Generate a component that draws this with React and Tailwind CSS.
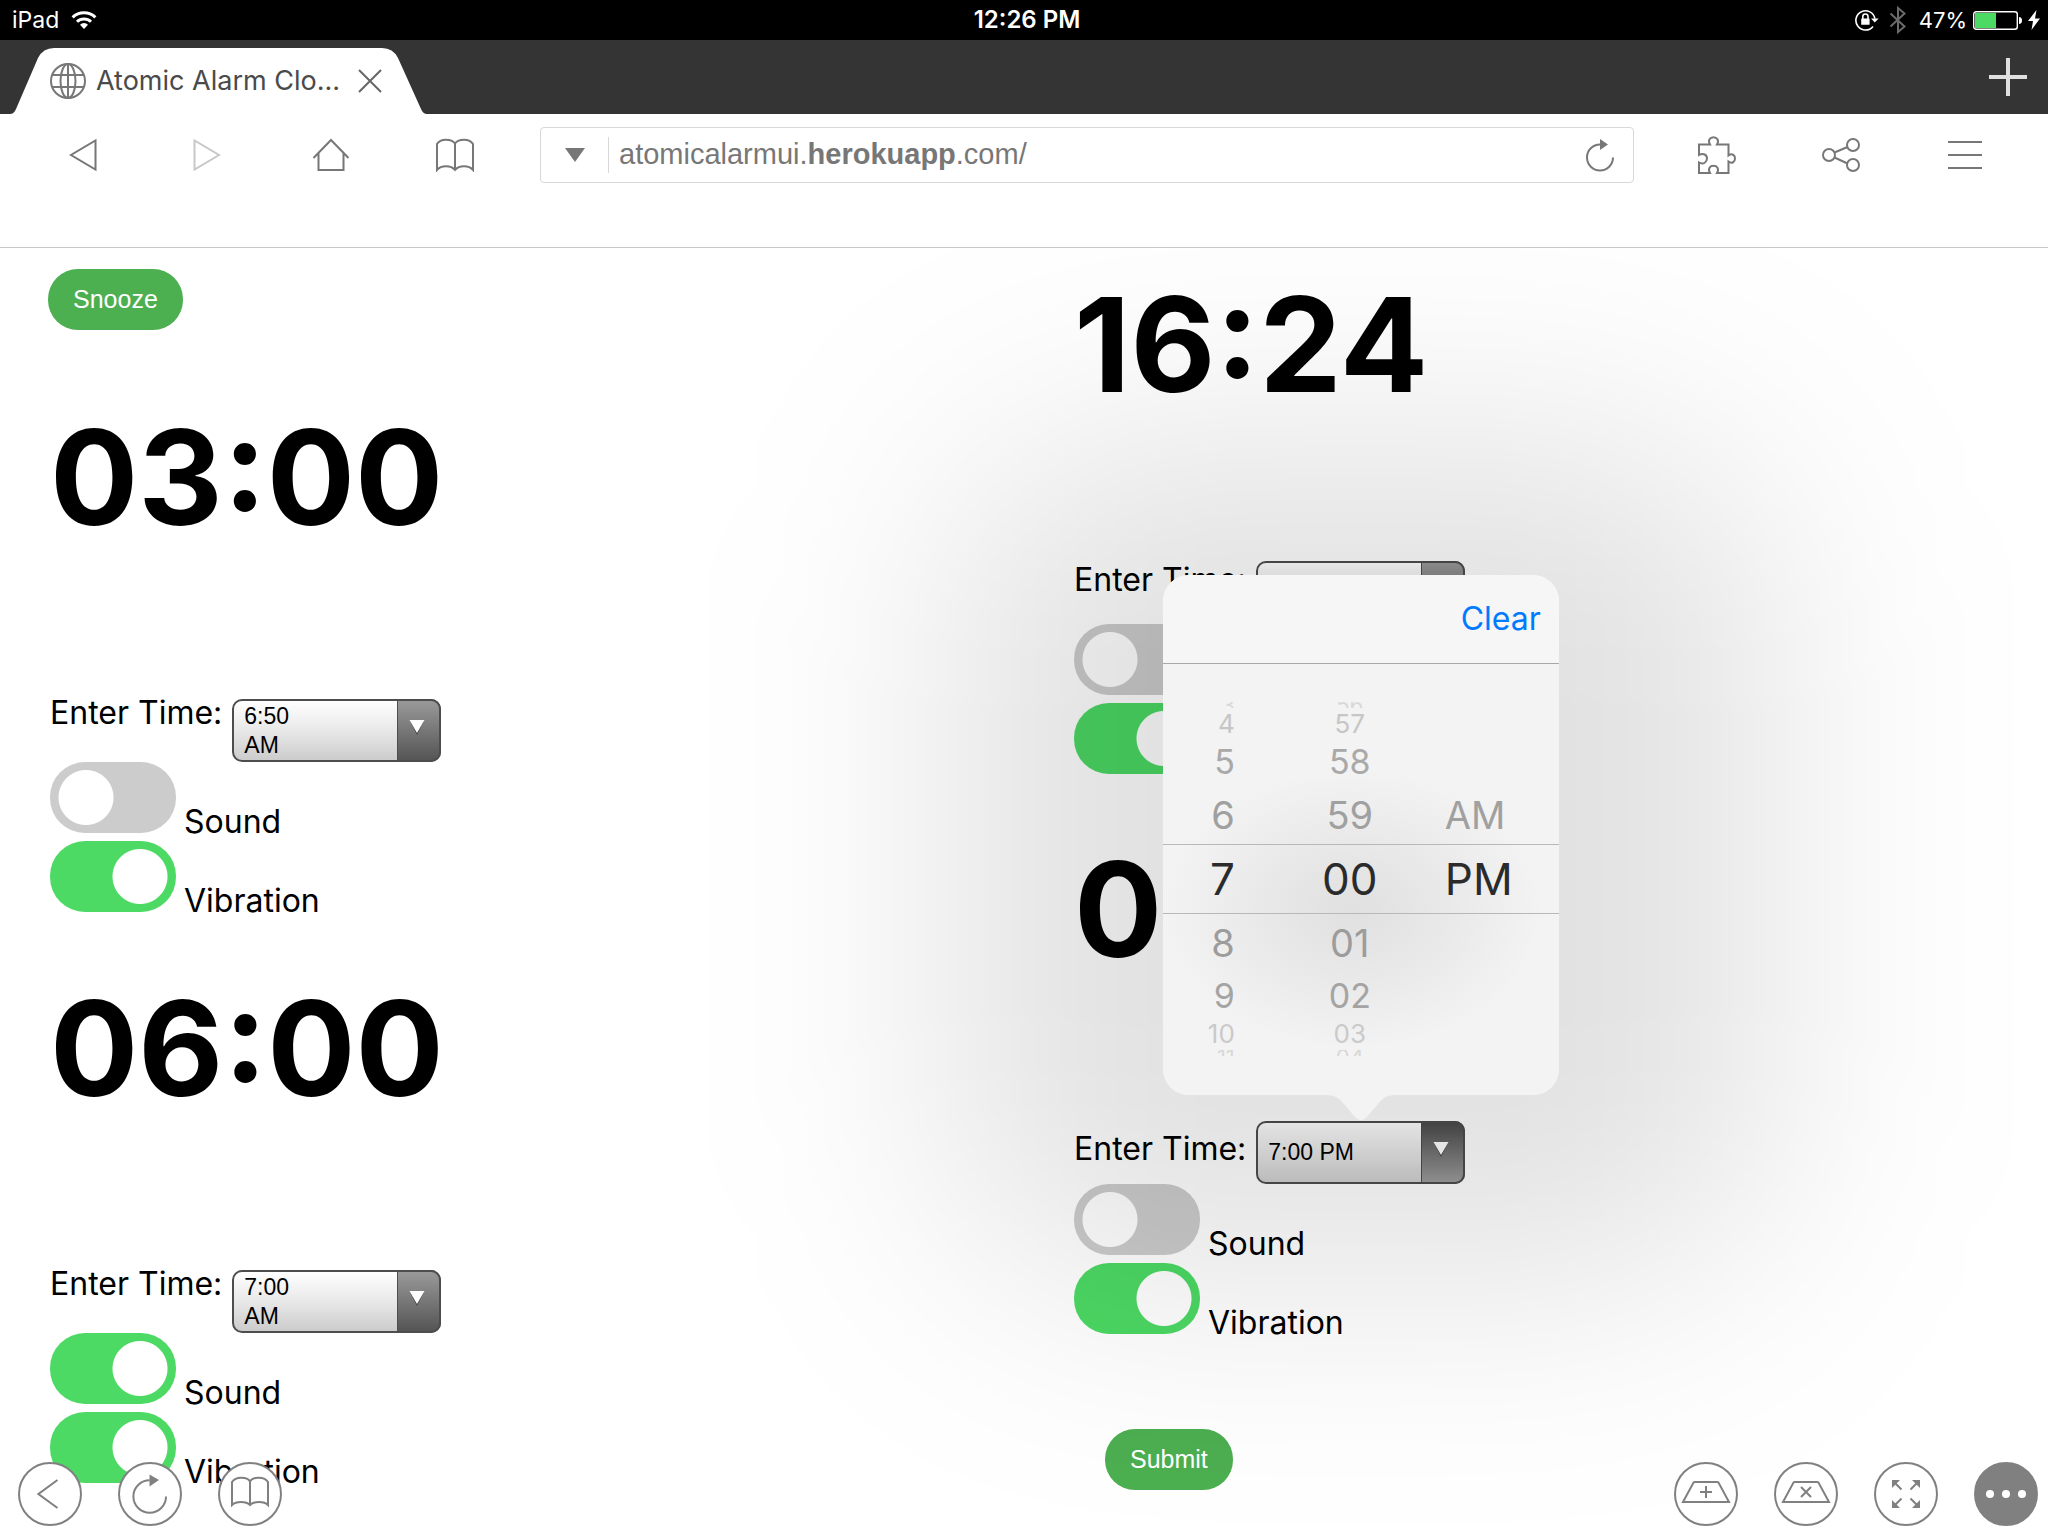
import React, { useState } from "react";

const SANS = "font-['Inter',sans-serif]";
const ARIAL = "font-['Liberation_Sans',Arial,sans-serif]";

/* ---------- icons ---------- */

function Line({ w, h, sw = 2, className = "", children }) {
  return (
    <svg width={w} height={h} viewBox={`0 0 ${w} ${h}`} fill="none" stroke="currentColor" strokeWidth={sw} className={className} aria-hidden="true">
      {children}
    </svg>
  );
}

const WifiIcon = () => (
  <svg width="26" height="18" viewBox="0 0 26 18" fill="none" stroke="#fff" strokeWidth="3" aria-hidden="true">
    <path d="M1.6 6.4a16.3 16.3 0 0 1 22.8 0" />
    <path d="M6 10.8a10 10 0 0 1 14 0" />
    <path d="M13 18l-4-4.3a5.8 5.8 0 0 1 8 0z" fill="#fff" stroke="none" />
  </svg>
);

const RotationLockIcon = () => (
  <svg width="24" height="22" viewBox="0 0 24 22" fill="none" stroke="#fff" strokeWidth="1.6" aria-hidden="true">
    <path d="M18 17.400A9.600 9.600 0 1 1 19.900 9.600" />
    <path d="M16 9.400h7.600l-3.800 4.200z" fill="#fff" stroke="none" />
    <path d="M7.800 10V7.600a2.600 2.600 0 0 1 5.200 0V10" />
    <rect x="6.200" y="9.400" width="8.400" height="6.400" rx="0.600" fill="#fff" stroke="none" />
  </svg>
);

const BluetoothIcon = () => (
  <Line w={18} h={28} className="text-[#6b6b6b]">
    <path d="M1.500 7.500l14 13L9 26V2l6.500 5.500-14 13" />
  </Line>
);

const BatteryIcon = () => (
  <svg width="49" height="19" viewBox="0 0 49 19" fill="none" aria-hidden="true">
    <rect x="0.7" y="0.7" width="43.600" height="17.600" rx="2.500" stroke="#fff" strokeWidth="1.400" />
    <rect x="2" y="2" width="21" height="15" fill="#4cd964" />
    <path d="M46 6c2 0 3 1.500 3 3.500S48 13 46 13z" fill="#fff" />
  </svg>
);

const BoltIcon = () => (
  <svg width="12" height="20" viewBox="0 0 12 20" fill="#fff" aria-hidden="true">
    <path d="M8.500 0L0 11h5L3.500 20L12 8.500H7z" />
  </svg>
);

const GlobeIcon = () => (
  <Line w={36} h={36} className="shrink-0 text-[#777]">
    <circle cx="18" cy="18" r="17" />
    <ellipse cx="18" cy="18" rx="7.500" ry="17" />
    <path d="M18 1v34M2.500 12h31M2.500 24h31" />
  </Line>
);

const BackIcon = () => (
  <Line w={28} h={34}>
    <path d="M26.500 2.500v29L2 17z" />
  </Line>
);

const ForwardIcon = () => (
  <Line w={28} h={34} className="text-[#c8c8c8]">
    <path d="M1.500 2.500v29L26 17z" />
  </Line>
);

const HomeIcon = () => (
  <Line w={38} h={34}>
    <path d="M1.500 20L19 2l17.500 18M6.500 15.500V32h25V15.500" />
  </Line>
);

const BookIcon = () => (
  <Line w={40} h={34}>
    <path d="M20 5.500C16 .5 5.500 .5 2 6v26c4-5 14-5 18 0c4-5 14-5 18 0V6C34.500 .5 24 .5 20 5.500zM20 5.500V32" />
  </Line>
);

const ReloadIcon = () => (
  <Line w={30} h={34}>
    <path d="M28 19.500a13 13 0 1 1-13-13" />
    <path d="M15 1v11l8-5.500z" fill="currentColor" stroke="none" />
  </Line>
);

const PuzzleIcon = () => (
  <Line w={38} h={38}>
    <path d="M1 8.500H12C9.500 4.500 12 1.200 15.500 1.200S21.500 4.500 19 8.500H30.500V19.500C34 17 37 19 37 22.500S34 28 30.500 25.500V37H19C21.500 32.500 19 29.700 15.500 29.700S9.500 32.500 12 37H1V26.500C5.500 29 9 26 9 22.500S5.500 16.500 1 19Z" />
  </Line>
);

const ShareIcon = () => (
  <Line w={40} h={36}>
    <circle cx="8" cy="18" r="6" />
    <circle cx="32" cy="8" r="6" />
    <circle cx="32" cy="28" r="6" />
    <path d="M13.500 15.500l13-5.500M13.500 20.500l13 6" />
  </Line>
);

const MenuIcon = () => (
  <Line w={36} h={30}>
    <path d="M1 2h34M1 15h34M1 28h34" />
  </Line>
);

/* ---------- browser chrome ---------- */

function StatusBar() {
  return (
    <div className={`${SANS} relative flex h-10 items-center justify-between bg-black pr-2 pl-3 text-[23px] text-white`}>
      <div className="flex items-center gap-3">
        <span>iPad</span>
        <WifiIcon />
      </div>
      <span className="absolute inset-x-0 pl-1.5 text-center text-2xl font-semibold">12:26 PM</span>
      <div className="flex items-center">
        <RotationLockIcon />
        <div className="pr-3 pl-2.5"><BluetoothIcon /></div>
        <span className="pr-1.5 text-[22px]">47%</span>
        <BatteryIcon />
        <div className="pl-1.5"><BoltIcon /></div>
      </div>
    </div>
  );
}

function TabStrip() {
  return (
    <div className="flex h-[74px] items-end justify-between bg-[#343434] pl-2.5">
      <div className="relative h-[66px] w-[417px]">
        <svg className="absolute inset-0" width="417" height="66" viewBox="0 0 417 66" fill="#fff" aria-hidden="true">
          <path d="M0 66Q4 66 6 61L28 10Q33 0 44 0H372Q383 0 388 10L411 61Q413 66 417 66Z" />
        </svg>
        <div className={`${SANS} relative flex h-full items-center pl-10 text-[#4a4a4a]`}>
          <GlobeIcon />
          <span className="w-[256px] truncate pl-2.5 text-[27px]">Atomic Alarm Clo...</span>
          <button type="button" aria-label="Close tab" className="ml-3.5 flex size-7 items-center justify-center text-[#666]">
            <Line w={24} h={24}>
              <path d="M1 1l22 22M23 1L1 23" />
            </Line>
          </button>
        </div>
      </div>
      <button type="button" aria-label="New tab" className="flex h-full w-20 items-center justify-center text-[#e0e0e0]">
        <Line w={38} h={38} sw={4}>
          <path d="M19 0v38M0 19h38" />
        </Line>
      </button>
    </div>
  );
}

function ToolButton({ label, children }) {
  return (
    <button type="button" aria-label={label} className="flex h-14 w-[124px] shrink-0 items-center justify-center">
      {children}
    </button>
  );
}

function Toolbar() {
  return (
    <div className="flex h-[134px] items-start border-b border-[#c8c8c8] bg-white pt-[13px] pr-[21px] pl-[21px] text-[#777]">
      <ToolButton label="Back"><BackIcon /></ToolButton>
      <ToolButton label="Forward"><ForwardIcon /></ToolButton>
      <ToolButton label="Home"><HomeIcon /></ToolButton>
      <ToolButton label="Bookmarks"><BookIcon /></ToolButton>
      <div className="mr-[21px] ml-[23px] flex h-14 flex-1 items-center rounded-sm border border-[#d8d8d8]">
        <button type="button" aria-label="Site options" className="flex h-9 w-[68px] items-center justify-center border-r border-[#d8d8d8]">
          <svg width="20" height="14" viewBox="0 0 20 14" fill="currentColor" aria-hidden="true">
            <path d="M0 0h20L10 14z" />
          </svg>
        </button>
        <div className={`${ARIAL} relative h-full flex-1 text-[29px]`}>
          <input aria-label="Address" defaultValue="atomicalarmui.herokuapp.com/" className="size-full bg-transparent px-2.5 text-transparent outline-none" />
          <span aria-hidden="true" className="pointer-events-none absolute inset-0 px-2.5 leading-[52px]">
            atomicalarmui.<b>herokuapp</b>.com/
          </span>
        </div>
        <button type="button" aria-label="Reload" className="flex h-full w-[66px] items-center justify-center">
          <ReloadIcon />
        </button>
      </div>
      <ToolButton label="Extensions"><PuzzleIcon /></ToolButton>
      <ToolButton label="Share"><ShareIcon /></ToolButton>
      <ToolButton label="Menu"><MenuIcon /></ToolButton>
    </div>
  );
}

/* ---------- wheel picker ---------- */

const ROWS = [
  "h-1.5 text-[22px] leading-[6px] text-[#d8d8d8]",
  "h-8 text-[26px] leading-8 text-[#c6c6c6]",
  "h-11 text-[34px] leading-[44px] text-[#a9a9a9]",
  "h-[60px] text-[38px] leading-[62px] text-[#a0a0a0]",
  "h-[70px] text-[44px] leading-[70px] text-[#2b2b2b]",
  "h-[60px] text-[38px] leading-[58px] text-[#9c9c9c]",
  "h-11 text-[34px] leading-[44px] text-[#a4a4a4]",
  "h-8 text-[26px] leading-8 text-[#cacaca]",
  "h-1.5 text-[22px] leading-[14px] text-[#d8d8d8]",
];

function Wheel({ label, items, className }) {
  return (
    <ul role="listbox" aria-label={label} className={className}>
      {items.map((item, i) => (
        <li key={i} role="option" aria-selected={i === 4} className={`overflow-hidden ${ROWS[i]}`}>
          {item}
        </li>
      ))}
    </ul>
  );
}

function TimePopover() {
  return (
    <>
      <div className="pointer-events-none absolute -bottom-[97px] left-1/2 z-10 h-[840px] w-[820px] -translate-x-1/2 rounded-[160px] bg-black/[0.118] blur-[125px]" />
      <div role="dialog" aria-label="Choose time" className={`${SANS} absolute bottom-full left-1/2 z-10 mb-[26px] w-[396px] -translate-x-1/2 rounded-[26px] bg-[#f3f3f3]`}>
        <div className="flex h-[89px] items-center justify-end rounded-t-[26px] border-b border-[#a8a8a8] bg-[#f6f6f6] px-[18px]">
          <button type="button" className="text-[32px] text-[#007aff]">Clear</button>
        </div>
        <div className="relative flex h-[431px] rounded-b-[26px] bg-[radial-gradient(ellipse_190px_140px_at_48%_57%,#e0e0e0,#e9e9e9_50%,#f3f3f3)] pt-[38px]">
          <div className="pointer-events-none absolute inset-x-0 top-[180px] h-[70px] border-y border-[#b8b8b8]" />
          <Wheel label="Hour" items={["3", "4", "5", "6", "7", "8", "9", "10", "11"]} className="w-[72px] text-right" />
          <Wheel label="Minute" items={["56", "57", "58", "59", "00", "01", "02", "03", "04"]} className="ml-5 w-[190px] text-center" />
          <Wheel label="Period" items={["", "", "", "AM", "PM", "", "", "", ""]} className="flex-1" />
        </div>
        <svg className="absolute top-full left-1/2 -translate-x-1/2" width="70" height="26" viewBox="0 0 70 26" fill="#f3f3f3" aria-hidden="true">
          <path d="M0 0C10 0 14 4 18 9L29 22Q35 28.500 41 22L52 9C56 4 60 0 70 0Z" />
        </svg>
      </div>
    </>
  );
}

/* ---------- alarm page ---------- */

const VALUE_PAD = {
  wrapped: "items-start pt-[3px] pr-24",
  centered: "items-center",
  empty: "items-start pt-2",
};

function TimeField({ id, value, layout, open }) {
  return (
    <div className="flex items-baseline gap-2.5">
      <label htmlFor={id} className="leading-[48px]">Enter Time:</label>
      <div className="relative h-[63px] w-[209px]">
        <select
          id={id}
          defaultValue={value}
          className={`${open ? "bg-[linear-gradient(#fff,#cfcfcf)]" : "bg-[linear-gradient(#fff,#e8e8e8_50%,#cccccc)]"} absolute inset-0 size-full appearance-none rounded-[10px] border-2 border-[#4d4d4d] text-transparent`}
        >
          <option value={value}>{value}</option>
        </select>
        <div className="pointer-events-none relative flex h-full">
          <div className={`${ARIAL} flex flex-1 pl-3 text-[23px] leading-[29px] ${VALUE_PAD[layout]}`}>
            <span>{value || "\u00a0"}</span>
          </div>
          <div className={`${open ? "bg-[linear-gradient(#4b4b4b,#9d9d9d)]" : "bg-[linear-gradient(#999,#555)]"} flex w-11 items-center justify-center rounded-r-[10px] border-2 border-l border-[#4d4d4d] pr-1 pb-1.5`}>
            <svg width="16" height="15" viewBox="0 0 16 15" aria-hidden="true">
              <path d="M1 1h14L8 15z" fill="#444" />
              <path d="M.5 0h15L8 13z" fill="#fff" />
            </svg>
          </div>
        </div>
        {open && <TimePopover />}
      </div>
    </div>
  );
}

function Toggle({ id, label, initial }) {
  const [on, setOn] = useState(initial);
  return (
    <div className="flex items-baseline gap-2">
      <input
        id={id}
        type="checkbox"
        role="switch"
        checked={on}
        onChange={(e) => setOn(e.target.checked)}
        className="h-[71px] w-[126px] appearance-none rounded-[35px] bg-[#ccc] bg-[radial-gradient(circle_27px,#fff_27px,transparent_28px)] bg-[position:-27px_0] bg-no-repeat checked:bg-[#4cd964] checked:bg-[position:27px_0]"
      />
      <label htmlFor={id} className="leading-[38px]">{label}</label>
    </div>
  );
}

function Alarm({ id, clock, value, layout, sound, open = false }) {
  return (
    <section className="pl-[50px] text-[32px]">
      <h1 className="mb-[130px] text-[131px] leading-[162px] font-bold">{clock}</h1>
      <TimeField id={`${id}-time`} value={value} layout={layout} open={open} />
      <Toggle id={`${id}-sound`} label="Sound" initial={sound} />
      <Toggle id={`${id}-vibration`} label="Vibration" initial />
    </section>
  );
}

function PillButton({ children }) {
  return (
    <button type="button" className={`${ARIAL} block h-[61px] rounded-[30px] bg-[#4caf50] px-[25px] text-[25px] text-white`}>
      {children}
    </button>
  );
}

function AlarmPage() {
  return (
    <main className={`${SANS} grid flex-1 grid-cols-2 items-start overflow-hidden bg-white text-black`}>
      <div className="flex flex-col gap-[48px] pt-[21px]">
        <div className="pb-[19px] pl-12">
          <PillButton>Snooze</PillButton>
        </div>
        <Alarm id="first" clock="03:00" value="6:50 AM" layout="wrapped" sound={false} />
        <Alarm id="second" clock="06:00" value="7:00 AM" layout="wrapped" sound />
      </div>
      <div className="flex flex-col gap-[47px] pt-4">
        <Alarm id="third" clock="16:24" value="" layout="empty" sound={false} />
        <Alarm id="fourth" clock="07:00" value="7:00 PM" layout="centered" sound={false} open />
        <div className="pt-10 pl-[81px]">
          <PillButton>Submit</PillButton>
        </div>
      </div>
    </main>
  );
}

/* ---------- floating controls ---------- */

function RoundButton({ label, filled = false, children }) {
  return (
    <button
      type="button"
      aria-label={label}
      className={`pointer-events-auto flex size-16 items-center justify-center rounded-full border-2 border-[#808080] ${filled ? "bg-[#808080] text-white" : "bg-white text-[#808080]"}`}
    >
      {children}
    </button>
  );
}

function FloatingControls() {
  return (
    <div className="pointer-events-none fixed inset-x-0 bottom-2.5 z-20 flex justify-between pr-2.5 pl-[18px]">
      <div className="flex gap-9">
        <RoundButton label="Go back">
          <Line w={22} h={30} className="mr-1"><path d="M20.500 1L1.500 15l19 14" /></Line>
        </RoundButton>
        <RoundButton label="Reload page">
          <Line w={36} h={40}>
            <path d="M34 22.500a16.300 16.300 0 1 1-16.300-16.300" />
            <path d="M17.500 .5v12l9.500-6.500z" fill="currentColor" stroke="none" />
          </Line>
        </RoundButton>
        <RoundButton label="Open bookmarks">
          <Line w={40} h={32} className="-mt-1">
            <path d="M20 5.500C17 .5 5.500 .5 2 6v23c4-4 14-4 18 0c4-4 14-4 18 0V6C34.500 .5 23 .5 20 5.500zM20 5.500V29" />
          </Line>
        </RoundButton>
      </div>
      <div className="flex gap-9">
        <RoundButton label="Add tab">
          <Line w={50} h={24} className="-mt-1 shrink-0">
            <path d="M2 22L12.500 2.500Q13 2 14 2h22q1 0 1.500.5L48 22zM19 12h12M25 6v12" />
          </Line>
        </RoundButton>
        <RoundButton label="Remove tab">
          <Line w={50} h={24} className="-mt-1 shrink-0">
            <path d="M2 22L12.500 2.500Q13 2 14 2h22q1 0 1.500.5L48 22zM20 7l10 10M30 7L20 17" />
          </Line>
        </RoundButton>
        <RoundButton label="Full screen">
          <Line w={28} h={28}>
            <path d="M3 3l6.500 6.500M25 3l-6.500 6.500M3 25l6.500-6.500M25 25l-6.500-6.500" />
            <path d="M0 0h8L0 8zM28 0v8L20 0zM0 28v-8l8 8zM28 28h-8l8-8z" fill="currentColor" stroke="none" />
          </Line>
        </RoundButton>
        <RoundButton label="More" filled>
          <svg width="40" height="8" viewBox="0 0 40 8" fill="currentColor" className="shrink-0" aria-hidden="true">
            <circle cx="4" cy="4" r="4" />
            <circle cx="20" cy="4" r="4" />
            <circle cx="36" cy="4" r="4" />
          </svg>
        </RoundButton>
      </div>
    </div>
  );
}

export default function App() {
  return (
    <div className="flex min-h-screen flex-col bg-white">
      <header>
        <StatusBar />
        <TabStrip />
        <Toolbar />
      </header>
      <AlarmPage />
      <FloatingControls />
    </div>
  );
}
